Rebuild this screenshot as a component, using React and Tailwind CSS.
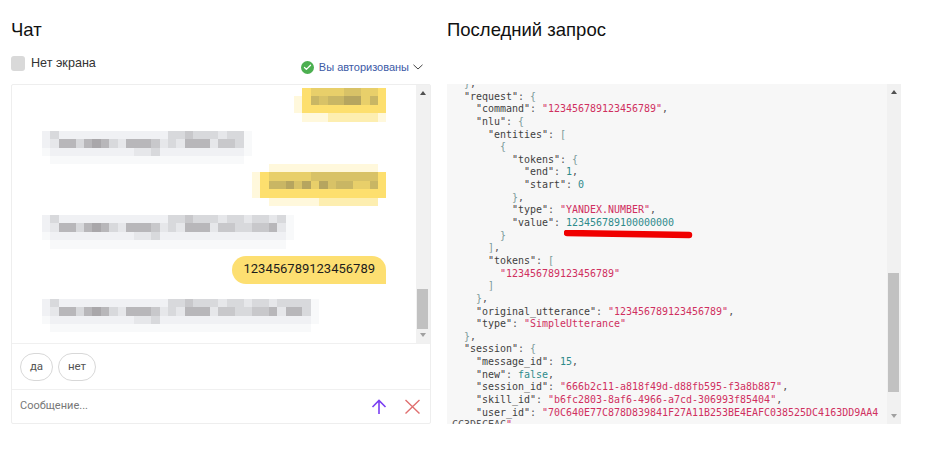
import { Check } from "lucide-react";

const SANS = "font-['Liberation_Sans',Arial,sans-serif]";

// пикселизованные сообщения: одна строка = ряд ячеек, символ = оттенок
const YELLOW = {
  ".": "#ffffff",
  a: "#fff8dc",
  b: "#fdeeb0",
  c: "#fde38a",
  d: "#fddf6e",
  e: "#e8cf6a",
  f: "#d8c267",
  g: "#c9b664",
  h: "#b6a55f",
};
const GRAY = {
  ".": "#ffffff",
  a: "#f8f9fa",
  b: "#f0f1f4",
  c: "#e6e7ea",
  d: "#d8d9dc",
  e: "#c8c8cb",
  f: "#b8b7ba",
  g: "#a9a7aa",
};

function Mosaic({ rows, palette, cell = 8.4 }) {
  const cols = rows[0].length;
  return (
    <svg width={cols * cell} height={rows.length * cell} className="block" shapeRendering="crispEdges">
      {rows.map((row, y) =>
        row.split("").map((c, x) => (
          <rect key={x} x={x * cell} y={y * cell} width={cell + 0.5} height={cell + 0.5} fill={palette[c]} />
        ))
      )}
    </svg>
  );
}

// все серые сообщения начинаются одинаково, отличается только длина
const grayRows = [
  "bdbbbbbbbbbbbbbddedddcddcddcdddda",
  "bcffdfgfdcfffecdcfffceeddeefcffdb",
  "abbbbbbbbbbccdbbbbbbbbbbbbbbbbbba",
  ".aaaaaaaaaaaaaaaaaaaaaaaaaaaaaaa.",
];
const gray = (n) => grayRows.map((r) => r.slice(0, n - 1) + (r[0] === "." ? "." : "a"));

const yellow1 = [
  ".deeeeffeed",
  "adgfgghhegd",
  "adddddddddd",
  ".aaabbbbbba",
];
const yellow2 = [
  "..aaaaaaaaaaaaa.",
  "adeeeeeffffffffd",
  "adgghfhehfggeegd",
  "addddddddddddddd",
  "..aaaaaabbbbbbb.",
];

const code = [
  '  },',
  '  "request": {',
  '    "command": "123456789123456789",',
  '    "nlu": {',
  '      "entities": [',
  '        {',
  '          "tokens": {',
  '            "end": 1,',
  '            "start": 0',
  '          },',
  '          "type": "YANDEX.NUMBER",',
  '          "value": 123456789100000000',
  '        }',
  '      ],',
  '      "tokens": [',
  '        "123456789123456789"',
  '      ]',
  '    },',
  '    "original_utterance": "123456789123456789",',
  '    "type": "SimpleUtterance"',
  '  },',
  '  "session": {',
  '    "message_id": 15,',
  '    "new": false,',
  '    "session_id": "666b2c11-a818f49d-d88fb595-f3a8b887",',
  '    "skill_id": "b6fc2803-8af6-4966-a7cd-306993f85404",',
  '    "user_id": "70C640E77C878D839841F27A11B253BE4EAFC038525DC4163DD9AA4',
  'CC3D5CEAC"',
];

function CodeLine({ line }) {
  const parts = line.split(/("[^"]*"(?=:)|"[^"]*"?|\b\d+\b|\bfalse\b|[{}[\]])/);
  return (
    <div className="h-[12.65px] whitespace-pre">
      {parts.map((p, i) => {
        let color = "text-[#555555]";
        if (/^"[^"]*"$/.test(p) && parts[i + 1]?.startsWith(":")) color = "text-[#3f3f3f]";
        else if (p.includes('"')) color = "text-[#d0305f]";
        else if (/^(\d+|false)$/.test(p)) color = "text-[#2e8b8b]";
        else if (/^[{}[\]]$/.test(p)) color = "text-[#7a9a9a]";
        return (
          <span key={i} className={color}>
            {p}
          </span>
        );
      })}
    </div>
  );
}

function Arrow({ up }) {
  return <div className={`w-0 h-0 border-x-[3.5px] border-x-transparent ${up ? "border-b-[4px] border-b-[#505050]" : "border-t-[4px] border-t-[#a0a0a0]"}`} />;
}

function Scrollbar({ thumbTop, thumbHeight }) {
  return (
    <div className="w-[14px] shrink-0 bg-[#f1f1f1] flex flex-col items-center py-[6px] relative">
      <Arrow up />
      <div style={{ top: thumbTop, height: thumbHeight }} className="absolute left-[1px] right-[2px] bg-[#c1c1c1]" />
      <div className="mt-auto">
        <Arrow />
      </div>
    </div>
  );
}

export default function App() {
  return (
    <div className={`w-[930px] h-[450px] bg-white overflow-hidden flex pl-[11px] pt-[19px] ${SANS}`}>
      {/* Чат */}
      <div className="w-[420px] shrink-0">
        <h2 className="text-[18.5px] leading-[22px] text-[#111111]">Чат</h2>
        <div className="flex justify-between mt-[15px] h-[28px]">
          <label className="flex items-start gap-[6px] text-[12.6px] leading-[15px] text-[#333333]">
            <span className="w-[14px] h-[15px] rounded-[3px] bg-[#d9d9d9]" />
            Нет экрана
          </label>
          <div className="flex items-center gap-[5px] pr-[8px] mt-[4px] self-start text-[11px] leading-[14px] text-[#3c5aa6]">
            <span className="w-[13px] h-[13px] rounded-full bg-[#4caf50] flex items-center justify-center">
              <Check className="w-[9px] h-[9px] text-white" strokeWidth={3.5} />
            </span>
            Вы авторизованы
            <svg width="10" height="6" viewBox="0 0 10 6" fill="none" stroke="#444444" strokeWidth="1" className="-ml-[1px]">
              <path d="M0.5 0.8L5 5L9.5 0.8" />
            </svg>
          </div>
        </div>

        <div className="border border-[#eeeeee] rounded-[2px] h-[340px] flex flex-col">
          <div className="h-[259px] flex border-b border-[#f0f0f0] overflow-hidden">
            <div className="flex-1 flex flex-col pl-[30px] pr-[30px]">
              <div className="flex justify-end mt-[3px]">
                <Mosaic rows={yellow1} palette={YELLOW} />
              </div>
              <div className="mt-[9px]">
                <Mosaic rows={gray(25)} palette={GRAY} />
              </div>
              <div className="flex justify-end">
                <Mosaic rows={yellow2} palette={YELLOW} />
              </div>
              <div className="mt-[9px]">
                <Mosaic rows={gray(30)} palette={GRAY} />
              </div>
              <div className="flex justify-end mt-[7px]">
                <div className="h-[28px] px-[11px] rounded-[14px] rounded-br-none bg-[#fddf71] text-[13px] leading-[26px] text-[#1c1c1c] font-['Roboto',sans-serif]">
                  123456789123456789
                </div>
              </div>
              <div className="mt-[15px]">
                <Mosaic rows={gray(33)} palette={GRAY} />
              </div>
            </div>
            <Scrollbar thumbTop={204} thumbHeight={40} />
          </div>
          <div className="h-[46px] flex items-center gap-[5px] pl-[8px] border-b border-[#f0f0f0] font-['Roboto',sans-serif] text-[11.5px] text-[#555555]">
            <button className="h-[28px] w-[33px] rounded-[14px] border border-[#d8d8d8]">да</button>
            <button className="h-[28px] w-[38px] rounded-[14px] border border-[#d8d8d8]">нет</button>
          </div>
          <div className="flex-1 flex items-center pl-[8px] pr-[10px] font-['Roboto',sans-serif] text-[11px] text-[#777777]">
            <span className="flex-1">Сообщение...</span>
            <svg width="16" height="16" viewBox="0 0 16 16" fill="none" stroke="#7a3ff2" strokeWidth="1.6">
              <path d="M8 15V1.5M1.5 8L8 1.5L14.5 8" />
            </svg>
            <svg width="15" height="15" viewBox="0 0 15 15" fill="none" stroke="#e07070" strokeWidth="1.4" className="ml-[18px]">
              <path d="M0.5 1L14.5 14.5M14.5 1L0.5 14.5" />
            </svg>
          </div>
        </div>
      </div>

      {/* Последний запрос */}
      <div className="w-[454px] ml-[16px] shrink-0">
        <h2 className="text-[18.5px] leading-[22px] text-[#111111]">Последний запрос</h2>
        <div className="mt-[43px] h-[340px] bg-[#f7f7f7] flex relative overflow-hidden">
          <pre className="flex-1 overflow-hidden pl-[5px] -mt-[6px] font-['DejaVu_Sans_Mono',monospace] text-[9.97px] leading-[12.65px]">
            {code.map((line, i) => (
              <CodeLine key={i} line={line} />
            ))}
          </pre>
          <Scrollbar thumbTop={189} thumbHeight={119} />
          <svg width="132" height="10" viewBox="0 0 132 10" className="absolute left-[117px] top-[146px]">
            <path d="M3 3L125 5" stroke="#f00000" strokeWidth="6.5" strokeLinecap="round" />
          </svg>
        </div>
      </div>
    </div>
  );
}
